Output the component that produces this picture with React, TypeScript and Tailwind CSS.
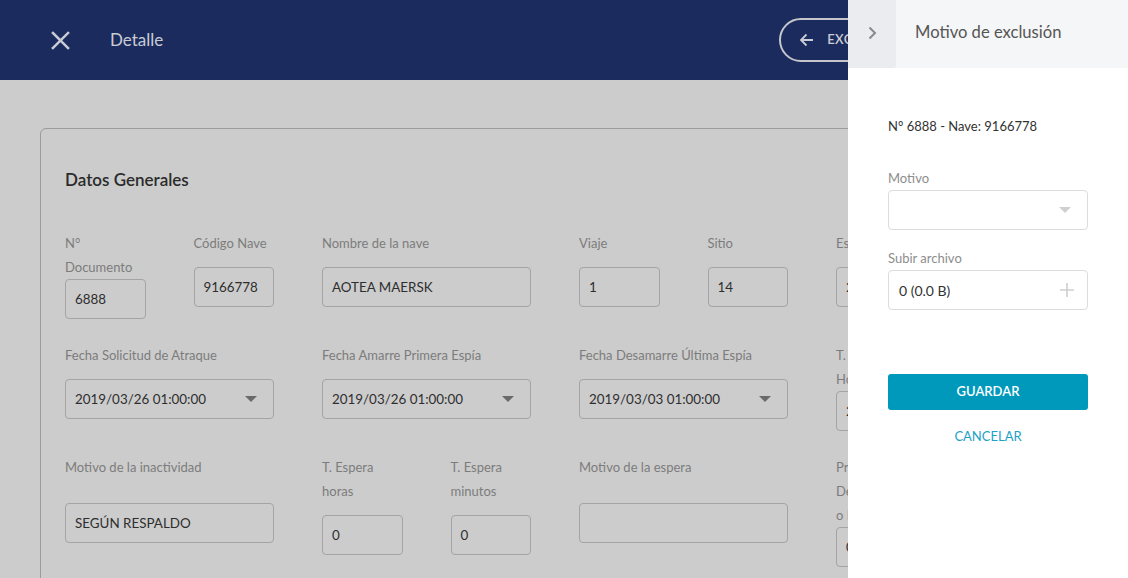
import React from "react";

const font = { fontFamily: "'Source Sans Pro', Lato, 'Noto Sans', sans-serif" };

function Caret({ className = "" }: { className?: string }) {
  return (
    <svg width="12" height="6" viewBox="0 0 12 6" className={className}>
      <path d="M0 0 L12 0 L6 6 Z" fill="currentColor" />
    </svg>
  );
}

function Field({
  label,
  value,
  span = 1,
  select = false,
  labelClass = "min-h-[36px]",
}: {
  label: React.ReactNode;
  value?: string;
  span?: number;
  select?: boolean;
  labelClass?: string;
}) {
  return (
    <div className={span === 2 ? "col-span-2" : "col-span-1"}>
      <div className={`text-[13px] leading-[24px] text-[#7c7c7c] ${labelClass}`}>{label}</div>
      <div className="h-[40px] border border-[#a4a4a4] rounded-[4px] flex items-center justify-between pl-[9px] pr-[16px] text-[13.4px] text-[#2e2e2e] whitespace-nowrap overflow-hidden">
        <span>{value}</span>
        {select && <Caret className="text-[#6a6a6a]" />}
      </div>
    </div>
  );
}

export default function App() {
  return (
    <div className="relative w-[1128px] h-[578px] overflow-hidden bg-[#cccccc]" style={font}>
      {/* Header */}
      <div className="h-[80px] bg-[#1c2b5e] flex items-center pl-[51px]">
        <svg width="19" height="19" viewBox="0 0 20 20" className="text-[#c9ccd4]">
          <path d="M2 2 L18 18 M18 2 L2 18" stroke="currentColor" strokeWidth="2.6" strokeLinecap="square" />
        </svg>
        <div className="ml-[40px] text-[17px] text-[#c9ccd4]">Detalle</div>
        <div className="ml-[616px] h-[44px] border-2 border-[#c4c6cc] rounded-full flex items-center pl-[18px] pr-[24px] text-[#c9ccd4]">
          <svg width="16" height="16" viewBox="0 0 16 16">
            <path d="M14 8 H2 M7.5 2.5 L2 8 L7.5 13.5" stroke="currentColor" strokeWidth="1.8" fill="none" />
          </svg>
          <span className="ml-[12px] text-[13px] font-semibold tracking-wide">EXCLUIR</span>
        </div>
      </div>

      {/* Body */}
      <div className="pt-[48px] pl-[40px]">
        <div className="w-[1100px] h-[600px] border border-[#9c9c9c] rounded-[6px] pl-[24px] pt-[39px]">
          <div className="text-[17px] font-semibold text-[#2b2b2b] leading-[24px]">Datos Generales</div>
          <div className="mt-[39px] grid grid-cols-[repeat(8,80.5px)] gap-x-[48px] gap-y-[24px] items-start">
            <Field label={<>N°<br />Documento</>} value="6888" />
            <Field label="Código Nave" value="9166778" />
            <Field label="Nombre de la nave" value="AOTEA MAERSK" span={2} />
            <Field label="Viaje" value="1" />
            <Field label="Sitio" value="14" />
            <Field label="Estado" value="2" />
            <div />

            <Field label="Fecha Solicitud de Atraque" value="2019/03/26 01:00:00" span={2} select />
            <Field label="Fecha Amarre Primera Espía" value="2019/03/26 01:00:00" span={2} select />
            <Field label="Fecha Desamarre Última Espía" value="2019/03/03 01:00:00" span={2} select />
            <Field label={<>T. Estadía<br />Horas</>} value="2" />
            <div />

            <Field label="Motivo de la inactividad" value="SEGÚN RESPALDO" span={2} labelClass="min-h-[36px] mb-[12px]" />
            <Field label={<>T. Espera<br />horas</>} value="0" labelClass="mb-[12px]" />
            <Field label={<>T. Espera<br />minutos</>} value="0" labelClass="mb-[12px]" />
            <Field label="Motivo de la espera" value="" span={2} labelClass="min-h-[36px] mb-[12px]" />
            <Field label={<>Presenta<br />Declaración<br />o Documento</>} value="0" labelClass="" />
          </div>
        </div>
      </div>

      {/* Drawer */}
      <div className="absolute top-0 right-0 w-[280px] h-[578px] bg-white flex flex-col">
        <div className="h-[68px] bg-[#f5f6f8] flex items-stretch">
          <div className="w-[48px] bg-[#ebecef] rounded-br-[3px] flex items-center justify-center pb-[2px]">
            <svg width="10" height="16" viewBox="0 0 10 16">
              <path d="M2.5 2.5 L8 8 L2.5 13.5" stroke="#8a8a8a" strokeWidth="2" fill="none" />
            </svg>
          </div>
          <div className="flex items-center pl-[19px] pb-[4px] text-[16.6px] text-[#555555]">Motivo de exclusión</div>
        </div>
        <div className="px-[40px]">
          <div className="mt-[48px] text-[13px] leading-[20px] text-[#333333]">N° 6888 - Nave: 9166778</div>
          <div className="mt-[32px] text-[13px] leading-[20px] text-[#8d8d8d]">Motivo</div>
          <div className="mt-[2px] h-[40px] border border-[#dcdcdc] rounded-[4px] flex items-center justify-end pr-[16px]">
            <Caret className="text-[#d0d0d0]" />
          </div>
          <div className="mt-[18px] text-[13px] leading-[20px] text-[#8d8d8d]">Subir archivo</div>
          <div className="mt-[2px] h-[40px] border border-[#dcdcdc] rounded-[4px] flex items-center justify-between pl-[10px] pr-[12px] text-[14px] text-[#333333]">
            <span>0 (0.0 B)</span>
            <svg width="16" height="16" viewBox="0 0 16 16">
              <path d="M8 1 V15 M1 8 H15" stroke="#cfcfcf" strokeWidth="1.6" />
            </svg>
          </div>
          <div className="mt-[64px] h-[36px] bg-[#0099bc] rounded-[3px] flex items-center justify-center text-white text-[13px] font-semibold">
            GUARDAR
          </div>
          <div className="mt-[17px] text-center text-[13px] text-[#1ba1c6]">CANCELAR</div>
        </div>
      </div>
    </div>
  );
}
